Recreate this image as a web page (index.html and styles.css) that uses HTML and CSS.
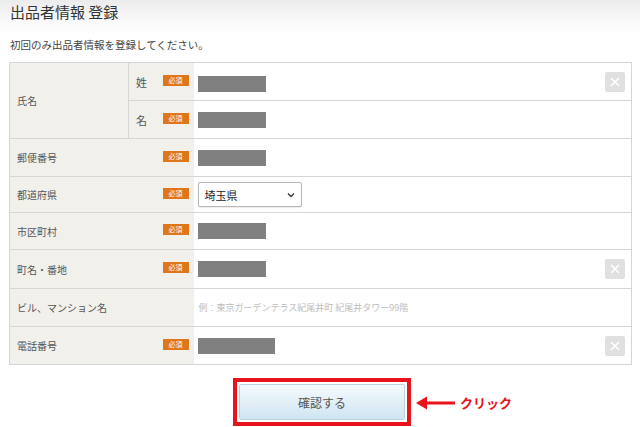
FILE: index.html
```html
<!DOCTYPE html>
<html lang="ja">
<head>
<meta charset="utf-8">
<link rel="stylesheet" href="styles.css">
</head>
<body>
<div class="page">
  <h1 class="title">出品者情報 登録</h1>
  <p class="lead">初回のみ出品者情報を登録してください。</p>
  <table class="form">
    <colgroup><col class="c1"><col class="c2"><col class="c3"><col class="c4"></colgroup>
    <tr class="r-a">
      <th rowspan="2" class="lbl">氏名</th>
      <th class="sub">姓</th>
      <th class="req"><span class="badge">必須</span></th>
      <td class="val"><div class="field"><span class="mask low"></span><span class="clear"><svg viewBox="0 0 20 20" width="20" height="20"><path d="M6 6L14 14M14 6L6 14" stroke="#fff" stroke-width="1.6"/></svg></span></div></td>
    </tr>
    <tr class="r-b">
      <th class="sub">名</th>
      <th class="req"><span class="badge">必須</span></th>
      <td class="val"><div class="field"><span class="mask"></span></div></td>
    </tr>
    <tr class="r-c">
      <th colspan="2" class="lbl">郵便番号</th>
      <th class="req"><span class="badge">必須</span></th>
      <td class="val"><div class="field"><span class="mask"></span></div></td>
    </tr>
    <tr class="r-d">
      <th colspan="2" class="lbl">都道府県</th>
      <th class="req"><span class="badge">必須</span></th>
      <td class="val"><div class="field"><div class="select"><span>埼玉県</span><svg viewBox="0 0 8 6" width="8" height="6"><path d="M1 1.5L4 4.5L7 1.5" fill="none" stroke="#333" stroke-width="1.3"/></svg></div></div></td>
    </tr>
    <tr class="r-e">
      <th colspan="2" class="lbl">市区町村</th>
      <th class="req"><span class="badge">必須</span></th>
      <td class="val"><div class="field"><span class="mask"></span></div></td>
    </tr>
    <tr class="r-f">
      <th colspan="2" class="lbl">町名・番地</th>
      <th class="req"><span class="badge">必須</span></th>
      <td class="val"><div class="field"><span class="mask"></span><span class="clear"><svg viewBox="0 0 20 20" width="20" height="20"><path d="M6 6L14 14M14 6L6 14" stroke="#fff" stroke-width="1.6"/></svg></span></div></td>
    </tr>
    <tr class="r-g">
      <th colspan="3" class="lbl">ビル、マンション名</th>
      <td class="val"><div class="field"><span class="ph">例：東京ガーデンテラス紀尾井町 紀尾井タワー99階</span></div></td>
    </tr>
    <tr class="r-h">
      <th colspan="2" class="lbl">電話番号</th>
      <th class="req"><span class="badge">必須</span></th>
      <td class="val"><div class="field"><span class="mask wide"></span><span class="clear"><svg viewBox="0 0 20 20" width="20" height="20"><path d="M6 6L14 14M14 6L6 14" stroke="#fff" stroke-width="1.6"/></svg></span></div></td>
    </tr>
  </table>
  <div class="actions">
    <div class="hl">
      <button class="btn">確認する</button>
      <div class="note">
        <svg viewBox="0 0 40 14" width="40" height="14"><path d="M3 7H39" stroke="#e8141c" stroke-width="3"/><path d="M0 7L11 0.5V13.5Z" fill="#e8141c"/></svg>
        <span>クリック</span>
      </div>
    </div>
  </div>
</div>
</body>
</html>
```

FILE: styles.css
```css
* { box-sizing: border-box; }
html, body { margin: 0; padding: 0; }
body {
  background: #fff;
  font-family: "Noto Sans CJK JP", "Noto Sans", sans-serif;
  color: #444;
  width: 640px;
  height: 427px;
  overflow: hidden;
}
.page {
  background: linear-gradient(#ececec 0px, #fafafa 22px, #fff 36px);
  padding: 2px 9px 0 9px;
}
.title {
  margin: 0 0 0 1px;
  font-size: 15px;
  font-weight: normal;
  color: #333;
  line-height: 20px;
}
.lead {
  margin: 16px 0 0 1px;
  font-size: 10.5px;
  line-height: 14px;
  color: #444;
}
.form {
  margin-top: 10px;
  width: 622px;
  border-collapse: collapse;
  table-layout: fixed;
  border: 1px solid #d6d6d6;
}
.c1 { width: 119px; }
.c2 { width: 30px; }
.c3 { width: 35px; }
.c4 { width: 438px; }
.form th, .form td {
  padding: 0;
  border-top: 1px solid #d6d6d6;
  font-weight: normal;
  text-align: left;
  vertical-align: middle;
}
.form th { background: #f2f0eb; }
.lbl {
  font-size: 10px;
  color: #555;
  padding-left: 7px !important;
}
.sub {
  border-left: 1px solid #d6d6d6;
  font-size: 11px;
  color: #555;
  padding-left: 7px !important;
}
.badge {
  display: block;
  margin: -3px 0 0 4px;
  width: 26px;
  height: 11px;
  background: #e0761a;
  color: #fff;
  font-size: 7px;
  line-height: 11px;
  text-align: center;
}
.r-a { height: 38px; }
.r-b { height: 38px; }
.r-c { height: 38px; }
.r-d { height: 36px; }
.r-e { height: 37px; }
.r-f { height: 39px; }
.r-g { height: 38px; }
.r-h { height: 38px; }
.val { background: #fff; }
.field {
  display: flex;
  align-items: center;
  padding-left: 4px;
  padding-right: 6px;
}
.mask {
  width: 68px;
  height: 16px;
  background: #808080;
}
.mask.low { margin-top: 5px; }
.mask.wide { width: 77px; }
.clear {
  margin-left: auto;
  width: 20px;
  height: 20px;
  background: #e0e0e0;
  border-radius: 2px;
  display: flex;
}
.select {
  width: 104px;
  height: 25px;
  border: 1px solid #b8b8b8;
  border-radius: 2px;
  display: flex;
  align-items: center;
  justify-content: space-between;
  padding: 0 6px 0 6px;
  font-size: 11px;
  color: #222;
  background: #fff;
  box-shadow: 0 1px 1px rgba(0,0,0,0.08);
}
.ph {
  font-size: 9px;
  color: #bdbdbd;
  padding-left: 1px;
}
.actions {
  display: flex;
  justify-content: center;
  margin-top: 13px;
  padding-left: 4px;
}
.hl {
  position: relative;
  border: 4px solid #e8141c;
  padding: 2px;
}
.btn {
  display: block;
  width: 166px;
  height: 36px;
  border: 1px solid #b9d3e2;
  border-radius: 2px;
  background: linear-gradient(#f5fafd, #cfe5f2);
  font-family: "Noto Sans CJK JP", sans-serif;
  font-size: 12px;
  color: #555;
  padding: 0;
}
.note {
  position: absolute;
  left: 179px;
  top: 11px;
  display: flex;
  align-items: center;
  gap: 4px;
  color: #e8141c;
  font-weight: bold;
  font-size: 13px;
  white-space: nowrap;
}
```
